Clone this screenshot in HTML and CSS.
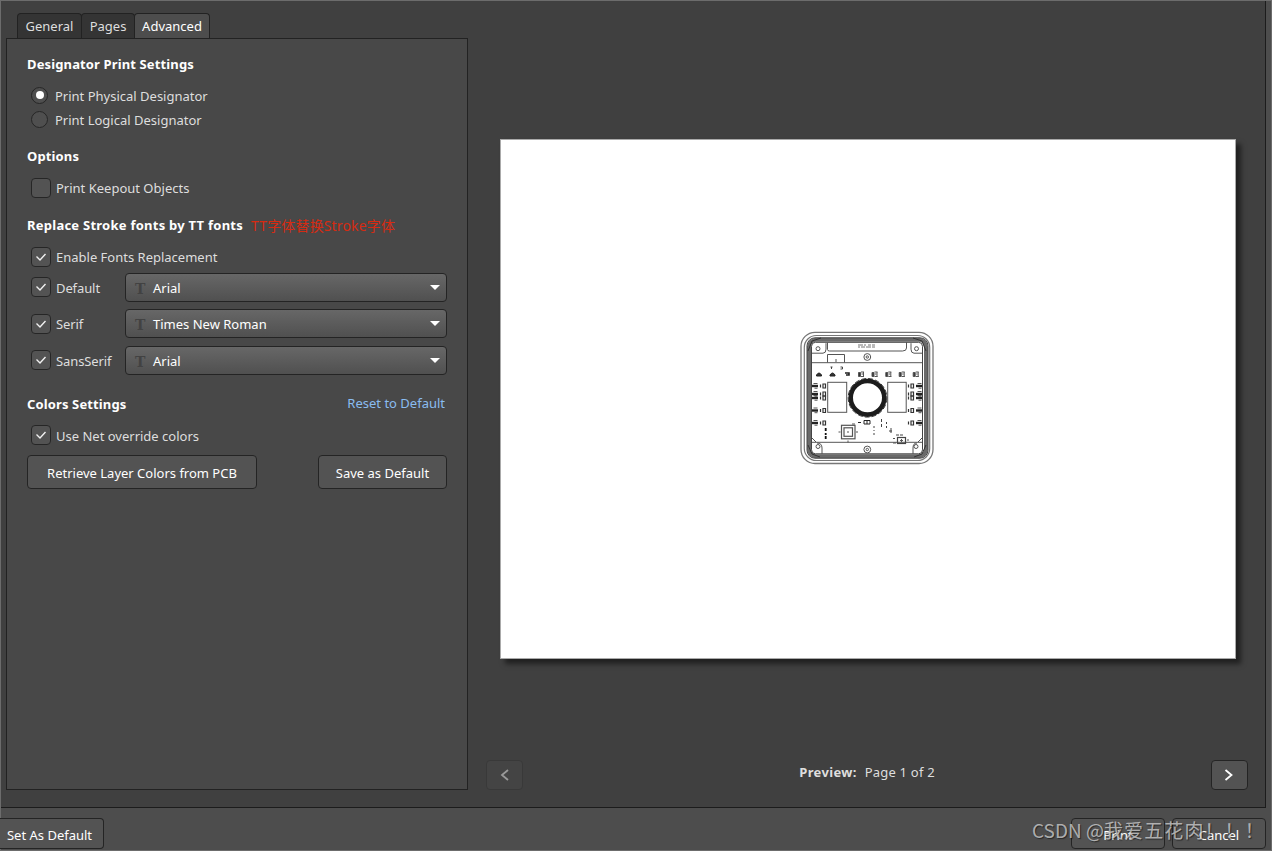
FILE: index.html
```html
<!DOCTYPE html>
<html lang="en">
<head>
    <meta charset="UTF-8">
    <title>Print</title>
    <link rel="stylesheet" href="styles.css">
</head>
<body>
    <div class="window">
        <div class="main">
            <div class="settings">
                <div class="tabs">
                    <div class="tab tab-general"><span>General</span></div>
                    <div class="tab tab-pages"><span>Pages</span></div>
                    <div class="tab tab-advanced active"><span>Advanced</span></div>
                </div>
                <div class="panel">
                    <h2>Designator Print Settings</h2>
                    <div class="row radio-row first"><span class="radio checked"></span><span class="label">Print Physical Designator</span></div>
                    <div class="row radio-row"><span class="radio"></span><span class="label">Print Logical Designator</span></div>

                    <h2 class="options">Options</h2>
                    <div class="row check-row"><span class="check"></span><span class="label">Print Keepout Objects</span></div>

                    <h2 class="replace">Replace Stroke fonts by TT fonts <span class="note">TT字体替换Stroke字体</span></h2>
                    <div class="row check-row">
                        <span class="check"><svg viewBox="0 0 18 18"><path d="M4.500 8.500l3.500 3.500 5.500-6"/></svg></span>
                        <span class="label">Enable Fonts Replacement</span>
                    </div>
                    <div class="row font-row default">
                        <span class="check"><svg viewBox="0 0 18 18"><path d="M4.500 8.500l3.500 3.500 5.500-6"/></svg></span>
                        <span class="label">Default</span>
                        <div class="select"><span class="type-icon">T</span><span>Arial</span><i class="arrow"></i></div>
                    </div>
                    <div class="row font-row serif">
                        <span class="check"><svg viewBox="0 0 18 18"><path d="M4.500 8.500l3.500 3.500 5.500-6"/></svg></span>
                        <span class="label">Serif</span>
                        <div class="select"><span class="type-icon">T</span><span>Times New Roman</span><i class="arrow"></i></div>
                    </div>
                    <div class="row font-row sans">
                        <span class="check"><svg viewBox="0 0 18 18"><path d="M4.500 8.500l3.500 3.500 5.500-6"/></svg></span>
                        <span class="label">SansSerif</span>
                        <div class="select"><span class="type-icon">T</span><span>Arial</span><i class="arrow"></i></div>
                    </div>

                    <div class="colors-head">
                        <h2>Colors Settings</h2>
                        <a class="reset">Reset to Default</a>
                    </div>
                    <div class="row check-row net-row">
                        <span class="check"><svg viewBox="0 0 18 18"><path d="M4.500 8.500l3.500 3.500 5.500-6"/></svg></span>
                        <span class="label">Use Net override colors</span>
                    </div>
                    <div class="buttons">
                        <div class="btn retrieve">Retrieve Layer Colors from PCB</div>
                        <div class="btn save">Save as Default</div>
                    </div>
                </div>
            </div>

            <div class="preview">
                <div class="paper">
                    <svg class="board" viewBox="0 0 145 145">
                        <defs>
                            <g id="chip">
                                <path d="M-2.5-1.5h2v4h-2zM0-2h3M2.5-2v5M0 2.5h3M.5 0h1.5" fill="#333"/>
                            </g>
                            <g id="side">
                                <path d="M-3.5 0h6" stroke="#222" stroke-width="2.4"/>
                                <path d="M-2-2.5h4M-1 2.2h3"/>
                            </g>
                            <g id="part">
                                <path d="M-2.5-1.5v3M0-2h2.5v4H0z" stroke="#333" stroke-width="1.2"/>
                            </g>
                        </defs>
                        <g fill="none" stroke="#555" stroke-width="1">
                            <rect x="6" y="7.3" width="132" height="131.2" rx="14" stroke="#777" stroke-width="1.3"/>
                            <rect x="9.3" y="10.5" width="125.4" height="125" rx="12" stroke="#777" stroke-width="1.2"/>
                            <rect x="14" y="14.8" width="117" height="116.4" rx="7" stroke="#6a6a6a" stroke-width="4"/>
                            <rect x="12" y="12.8" width="121" height="120.4" rx="8" stroke="#444"/>
                            <rect x="16.5" y="17.3" width="111" height="111.5" rx="4" stroke="#444"/>
                            <path d="M17 37.7h110M17 117.3h110"/>
                            <path d="M32.5 17.5v7q0 1.5 2 1.5h73q4 0 4-3v-6M17 28.2h11q3 0 3-4v-6M127 28.2h-8q-3 0-3-4v-6"/>
                            <path d="M32.5 37.5v-8h17v8M41 34v3"/>
                            <path d="M17 113l4 4M127 113l-4 4M22 118q5 0 5 5v6M122 118q-4 0-4 5v6"/>
                            <path d="M63 20h5m1 0h2m2 0h3m1 0h3M63 22h2m1 0h4m1 0h5m1 0h3" stroke="#777"/>
                            <circle cx="72.3" cy="32" r="3.4"/><circle cx="72.3" cy="32" r="1.2"/>
                            <circle cx="72.3" cy="124.5" r="3.4"/><circle cx="72.3" cy="124.5" r="1.2"/>
                            <circle cx="23" cy="23.7" r="2"/><circle cx="121.5" cy="23.7" r="2"/>
                            <circle cx="23" cy="121.5" r="2"/><circle cx="121" cy="121.5" r="2"/>
                            <path d="M13 26l4-10 9-3M131 26l-4-10-9-3M13 120l4 9 8 3M131 120l-4 9-8 3" stroke="#333"/>
                            <path d="M35.5 42h2m-1 0v2m9-2h2v2h-2" stroke="#444"/>
                            <path d="M21.5 50q2.5-4 5 0v1h-5zM35 50q2.500-4 5 0v1h-5z" fill="#333" stroke="#222"/>
                            <path d="M50 48h4v2h-3" stroke="#222" stroke-width="1.6"/>
                            <use href="#chip" x="66" y="49"/><use href="#chip" x="79.5" y="49"/>
                            <use href="#chip" x="93.3" y="49"/><use href="#chip" x="106.7" y="49"/>
                            <use href="#chip" x="120.7" y="49"/>
                            <rect x="32.7" y="57.3" width="19" height="30"/>
                            <rect x="92.7" y="57.3" width="18.5" height="30"/>
                            <circle cx="72.5" cy="72.8" r="16.8" stroke="#1c1c1c" stroke-width="4.6"/>
                            <circle cx="72.5" cy="72.8" r="19.3" stroke="#333" stroke-dasharray="5 2"/>
                            <use href="#side" x="20.5" y="61"/><use href="#part" x="28" y="61"/>
                            <use href="#side" x="20.5" y="69"/><use href="#part" x="28" y="69"/>
                            <use href="#side" x="20.5" y="73"/><use href="#part" x="28" y="73"/>
                            <use href="#side" x="20.5" y="85.5"/><use href="#part" x="28" y="85.5"/>
                            <use href="#side" x="20.5" y="98"/><use href="#part" x="28" y="98"/>
                            <use href="#side" x="124.5" y="61"/><use href="#part" x="116" y="61"/>
                            <use href="#side" x="124.5" y="69"/><use href="#part" x="116" y="69"/>
                            <use href="#side" x="124.5" y="73"/><use href="#part" x="116" y="73"/>
                            <use href="#side" x="124.5" y="85.5"/><use href="#part" x="116" y="85.5"/>
                            <use href="#side" x="124.5" y="98"/><use href="#part" x="116" y="98"/>
                            <rect x="46.5" y="100.3" width="13.5" height="13.5" stroke-width="1.2"/>
                            <rect x="49" y="102.8" width="8.5" height="8.5" stroke-width="1.2"/>
                            <path d="M52 107h2M43.5 107h2M61 107h2M53 115.5v2M57 99h3"/>
                            <path d="M30.7 103v3m0 2v2m0 1v3" stroke="#111" stroke-width="1.8"/>
                            <path d="M63 97.5h3M69 95.5h6v3.5h-6zM72 95v4" stroke="#222"/>
                            <path d="M79 101v2m0 2v1m0 2v2M86.5 94v3m0 2v3M91.5 97v2m0 2v2M96 103v5M101 110h3m1 0h3M94 106h3" stroke="#444"/>
                            <rect x="102.5" y="112.5" width="8" height="6" stroke="#444" stroke-width="1.2"/>
                            <path d="M105 115.5h3M106.5 114v3M98 113.5h2M112 115h2M98 118h3"/>
                        </g>
                    </svg>
                </div>
                <div class="pager">
                    <div class="nav disabled"><svg viewBox="0 0 12 14"><path d="M9 2L3 7l6 5"/></svg></div>
                    <div class="page"><b>Preview:</b><span>Page 1 of 2</span></div>
                    <div class="nav"><svg viewBox="0 0 12 14"><path d="M2.500 2l6 5-6 5"/></svg></div>
                </div>
            </div>
        </div>

        <div class="footer">
            <div class="btn set-default">Set As Default</div>
            <div class="btn print">Print</div>
            <div class="btn cancel">Cancel</div>
            <div class="watermark">CSDN @<span>我爱五花肉！！！</span></div>
        </div>
    </div>
</body>
</html>
```
FILE: styles.css
```css
* {
    box-sizing: border-box;
}
body {
    margin: 0;
    width: 1272px;
    height: 851px;
    overflow: hidden;
    background: #4d4d4d;
    color: #dedede;
    font: 13px/24px "Noto Sans", "Open Sans", "Noto Sans CJK SC", sans-serif;
    white-space: nowrap;
}
.window {
    height: 851px;
    border: 1px solid #6c6c6c;
    display: flex;
    flex-direction: column;
}
.main {
    width: 1265px;
    height: 807px;
    background: #404040;
    border-right: 1px solid #1c1c1c;
    border-bottom: 1px solid #1c1c1c;
    display: flex;
}
.settings {
    width: 462px;
    margin-left: 5px;
    padding-top: 12px;
}
.tabs {
    display: flex;
    height: 25px;
    padding-left: 11px;
}
.tab {
    height: 25px;
    border: 1px solid #222;
    border-bottom: 0;
    border-radius: 4px 4px 0 0;
    background: #343434;
    text-align: center;
    line-height: 25px;
}
.tab-general {
    width: 65px;
}
.tab-pages {
    width: 54px;
    margin-left: -1px;
}
.tab-advanced {
    width: 76px;
    margin-left: -1px;
}
.tab.active {
    background: #4d4d4d;
    color: #fff;
}
.panel {
    height: 752px;
    border: 1px solid #222;
    background: #484848;
    padding: 13px 20px 0;
}
h2 {
    margin: 0;
    height: 24px;
    font-size: 13px;
    font-weight: bold;
    letter-spacing: .13px;
    color: #fff;
}
.options {
    margin-top: 12px;
}
.replace {
    margin-top: 13px;
    letter-spacing: .25px;
    display: flex;
}
.note {
    margin: 1px 0 0 8px;
    font-weight: normal;
    font-size: 14px;
    letter-spacing: .15px;
    color: #d62b12;
}
.row {
    display: flex;
    align-items: center;
    height: 24px;
    padding-left: 4px;
}
.first,
.check-row {
    margin-top: 8px;
}
.radio {
    width: 17px;
    height: 17px;
    margin: 0 7px 2px 0;
    border: 1px solid #262626;
    border-radius: 50%;
    background: #4f4f4f;
    display: flex;
    align-items: center;
    justify-content: center;
}
.radio.checked::after {
    content: "";
    width: 8px;
    height: 8px;
    border-radius: 50%;
    background: #fff;
}
.check {
    flex: none;
    width: 20px;
    height: 20px;
    margin-right: 5px;
    border: 1px solid #262626;
    border-radius: 4px;
    background: #535353;
}
.check svg {
    display: block;
    width: 18px;
    height: 18px;
    fill: none;
    stroke: #f0f0f0;
    stroke-width: 1.4;
}
.default .check,
.sans .check,
.net-row .check {
    margin-bottom: 2px;
}
.font-row {
    height: 29px;
}
.font-row .label {
    width: 69px;
    letter-spacing: -.1px;
}
.default {
    margin-top: 4px;
}
.serif {
    margin-top: 7px;
}
.sans {
    margin-top: 8px;
}
.select {
    width: 322px;
    height: 29px;
    border: 1px solid #242424;
    border-radius: 4px;
    background: linear-gradient(#676767, #505050);
    color: #fff;
    display: flex;
    align-items: center;
    padding: 0 6px 0 9px;
}
.type-icon {
    width: 18px;
    padding-top: 3px;
    font: bold 16px "DejaVu Serif", serif;
    font-size: 14px;
    color: #424242;
}
.arrow {
    margin-left: auto;
    border: 5px solid transparent;
    border-top-color: #fff;
    border-bottom: 0;
}
.colors-head {
    display: flex;
    justify-content: space-between;
    margin-top: 17px;
    padding-right: 2px;
}
.reset {
    color: #8abcf0;
    line-height: 22px;
}
.buttons {
    display: flex;
    justify-content: space-between;
    margin-top: 7px;
}
.btn {
    height: 34px;
    border: 1px solid #242424;
    border-radius: 4px;
    background: #535353;
    color: #fff;
    text-align: center;
    line-height: 34px;
}
.retrieve {
    width: 230px;
}
.save {
    width: 129px;
}
.preview {
    padding: 138px 0 0 18px;
    width: 780px;
}
.paper {
    width: 736px;
    height: 520px;
    margin-left: 14px;
    border: 1px solid #aaa;
    background: #fff;
    box-shadow: 5px 5px 5px rgba(0, 0, 0, .5);
}
.board {
    display: block;
    width: 145px;
    height: 145px;
    margin: 185px 0 0 294px;
}
.pager {
    display: flex;
    justify-content: space-between;
    margin-top: 101px;
    width: 762px;
}
.nav {
    width: 37px;
    height: 30px;
    border: 1px solid #242424;
    border-radius: 4px;
    background: #535353;
    display: flex;
    align-items: center;
    justify-content: center;
}
.nav svg {
    width: 12px;
    height: 14px;
    fill: none;
    stroke: #fff;
    stroke-width: 1.8;
}
.nav.disabled {
    background: #444;
    border-color: #393939;
}
.nav.disabled svg {
    stroke: #999;
}
.page {
    letter-spacing: .2px;
}
.page b {
    margin-right: 8px;
    letter-spacing: .35px;
}
.footer {
    display: flex;
    position: relative;
    padding: 10px 5px 0 0;
    height: 42px;
}
.footer .btn {
    height: 31px;
    line-height: 33px;
}
.set-default {
    width: 104px;
    margin: 0 auto 0 -1px;
    padding-right: 4px;
    border-left: 0;
    border-radius: 0 4px 4px 0;
}
.print {
    width: 94px;
    margin-right: 7px;
}
.cancel {
    width: 94px;
}
.watermark {
    position: absolute;
    left: 1031px;
    top: 7px;
    font: 19px/30px "Noto Sans CJK SC", sans-serif;
    color: rgba(205, 205, 205, .8);
    text-shadow: 1px 1px 1px rgba(0, 0, 0, .5);
}
.watermark span {
    letter-spacing: 1.1px;
}
```
